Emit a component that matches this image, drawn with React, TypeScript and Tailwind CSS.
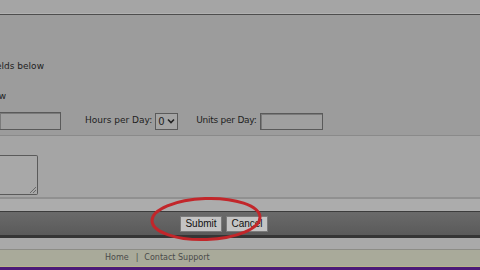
import React from "react";

const font = { fontFamily: '"DejaVu Sans", Verdana, sans-serif' };

export default function App() {
  return (
    <div className="relative w-[480px] h-[270px] overflow-hidden flex flex-col bg-[#9c9c9c]" style={font}>
      <div className="h-[14px] bg-[#a5a5a5] border-b border-[#b0b0b0]" />
      <div className="h-[1px] bg-[#4e4e4e]" />
      <div className="h-[120px] bg-[#9c9c9c] flex flex-col text-[9px] text-[#1e1e1e]">
        <div className="h-[45px]" />
        <div className="w-[44px] flex justify-end overflow-hidden whitespace-nowrap leading-[12px]">
          <span>Please fill in the fields below</span>
        </div>
        <div className="h-[18px]" />
        <div className="w-[6px] flex justify-end overflow-hidden whitespace-nowrap leading-[12px]">
          <span>below</span>
        </div>
        <div className="h-[10px]" />
        <div className="flex items-center h-[18px]">
          <div className="w-[62px] h-[18px] -ml-px border border-[#5a5a5a] bg-[#a0a0a0] shadow-[inset_1px_1px_0_#7a7a7a]" />
          <span className="ml-[24px]">Hours per Day:</span>
          <div className="ml-[3px] w-[23px] h-[17px] border border-[#5a5a5a] bg-[#a4a4a4] flex items-center justify-between px-[2px] text-[10px]">
            <span>0</span>
            <svg width="8" height="6" viewBox="0 0 8 6"><path d="M1 1.5 L4 4.5 L7 1.5" stroke="#222" strokeWidth="1.6" fill="none" /></svg>
          </div>
          <span className="ml-[18px] tracking-[-0.25px]">Units per Day:</span>
          <div className="ml-[3px] w-[63px] h-[17px] border border-[#5a5a5a] bg-[#a0a0a0] shadow-[inset_1px_1px_0_#7a7a7a]" />
        </div>
      </div>
      <div className="h-[1px] bg-[#8a8a8a]" />
      <div className="h-[61px] bg-[#a5a5a5] flex flex-col">
        <div className="h-[19px]" />
        <div className="relative w-[38px] h-[40px] border border-[#5a5a5a] border-l-0 bg-[#a8a8a8] rounded-r-[2px]">
          <svg className="absolute right-[1px] bottom-[1px]" width="6" height="6" viewBox="0 0 6 6">
            <path d="M0 6 L6 0 M3 6 L6 3" stroke="#6a6a6a" strokeWidth="1" />
          </svg>
        </div>
      </div>
      <div className="h-[2px] bg-[#909090]" />
      <div className="h-[12px] bg-[#acacac]" />
      <div className="h-[1px] bg-[#3c3c3c]" />
      <div className="h-[23px] bg-gradient-to-b from-[#6a6a6a] to-[#5a5a5a] flex items-center pl-[180px] gap-[4px]" style={{ fontFamily: '"Liberation Sans", Arial, sans-serif' }}>
        <div className="w-[42px] h-[16px] bg-[#c4c4c4] border border-[#7a7a7a] text-[10px] text-[#111] flex items-center justify-center">Submit</div>
        <div className="w-[42px] h-[16px] bg-[#c4c4c4] border border-[#7a7a7a] text-[10px] text-[#111] flex items-center justify-center">Cancel</div>
      </div>
      <div className="h-[3px] bg-[#353535]" />
      <div className="h-[11px] bg-[#a9a9a9]" />
      <div className="h-[1px] bg-[#8c8c86]" />
      <div className="h-[16px] bg-[#a9aa9a] flex items-center text-[8px] text-[#4a4a4a]">
        <span className="ml-[105px]">Home</span>
        <span className="ml-[7px]">|</span>
        <span className="ml-[6px]">Contact Support</span>
      </div>
      <div className="h-[1px] bg-[#b8b48a]" />
      <div className="flex-1 bg-[#4c1a78]" />
      <svg className="absolute left-0 top-0" width="480" height="270" viewBox="0 0 480 270">
        <ellipse cx="206" cy="219" rx="54" ry="20.5" fill="none" stroke="#c2262a" strokeWidth="3" transform="rotate(-2 206 219)" />
      </svg>
    </div>
  );
}
